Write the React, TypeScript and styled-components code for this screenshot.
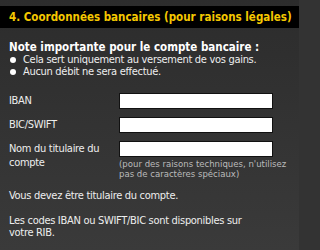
import styled, { createGlobalStyle } from "styled-components";

const GlobalStyle = createGlobalStyle`
  html, body {
    margin: 0;
    padding: 0;
    background: #333;
  }
`;

const Panel = styled.div`
  width: 299px;
  height: 250px;
  box-sizing: border-box;
  padding-top: 6px;
  background: linear-gradient(#2c2c2c, #3a3a3a);
  font-family: "DejaVu Sans Condensed", "DejaVu Sans", sans-serif;
  font-size: 11px;
  letter-spacing: -0.3px;
  color: #eee;
  overflow: hidden;
`;

const Header = styled.h2`
  margin: 0;
  height: 22px;
  padding-left: 9px;
  display: flex;
  align-items: center;
  background: #000;
  color: #f5c800;
  font-size: 11.5px;
  letter-spacing: 0;
  font-weight: bold;
  white-space: nowrap;
`;

const Body = styled.div`
  padding: 13px 9px 0 9px;
`;

const NoteTitle = styled.div`
  font-weight: bold;
  font-size: 11.5px;
  letter-spacing: 0;
  line-height: 13px;
  color: #fff;
  white-space: nowrap;
`;

const BulletList = styled.ul`
  margin: 0;
  padding: 0;
  list-style: none;
`;

const Bullet = styled.li`
  display: flex;
  align-items: center;
  gap: 7px;
  line-height: 12px;
  white-space: nowrap;

  &::before {
    content: "";
    flex-shrink: 0;
    width: 6px;
    height: 6px;
    border-radius: 50%;
    background: #fff;
    margin-left: 1px;
  }
`;

const Fields = styled.div`
  margin-top: 15px;
  display: grid;
  grid-template-columns: 110px 154px;
  row-gap: 8px;
`;

const Label = styled.label`
  line-height: 14px;
  padding-top: 1px;
`;

const FieldCell = styled.div`
  display: flex;
  flex-direction: column;
`;

const Input = styled.input`
  box-sizing: border-box;
  width: 154px;
  height: 16px;
  margin: 0;
  border: 1px solid #111;
  background: #fff;
`;

const Hint = styled.div`
  width: 185px;
  margin-top: 2px;
  font-size: 9.5px;
  letter-spacing: 0;
  line-height: 10px;
  color: #bbb;
  white-space: nowrap;
`;

const Paragraph = styled.p`
  margin: ${(p: { $top: number }) => p.$top}px 0 0 0;
  line-height: 12px;
`;

export default function App() {
  return (
    <>
      <GlobalStyle />
      <Panel>
        <Header>4. Coordonnées bancaires (pour raisons légales)</Header>
        <Body>
          <NoteTitle>Note importante pour le compte bancaire :</NoteTitle>
          <BulletList>
            <Bullet>Cela sert uniquement au versement de vos gains.</Bullet>
            <Bullet>Aucun débit ne sera effectué.</Bullet>
          </BulletList>
          <Fields>
            <Label>IBAN</Label>
            <FieldCell>
              <Input type="text" />
            </FieldCell>
            <Label>BIC/SWIFT</Label>
            <FieldCell>
              <Input type="text" />
            </FieldCell>
            <Label>Nom du titulaire du compte</Label>
            <FieldCell>
              <Input type="text" />
              <Hint>
                (pour des raisons techniques, n'utilisez
                <br />
                pas de caractères spéciaux)
              </Hint>
            </FieldCell>
          </Fields>
          <Paragraph $top={11}>Vous devez être titulaire du compte.</Paragraph>
          <Paragraph $top={13}>
            Les codes IBAN ou SWIFT/BIC sont disponibles sur
            <br />
            votre RIB.
          </Paragraph>
        </Body>
      </Panel>
    </>
  );
}
